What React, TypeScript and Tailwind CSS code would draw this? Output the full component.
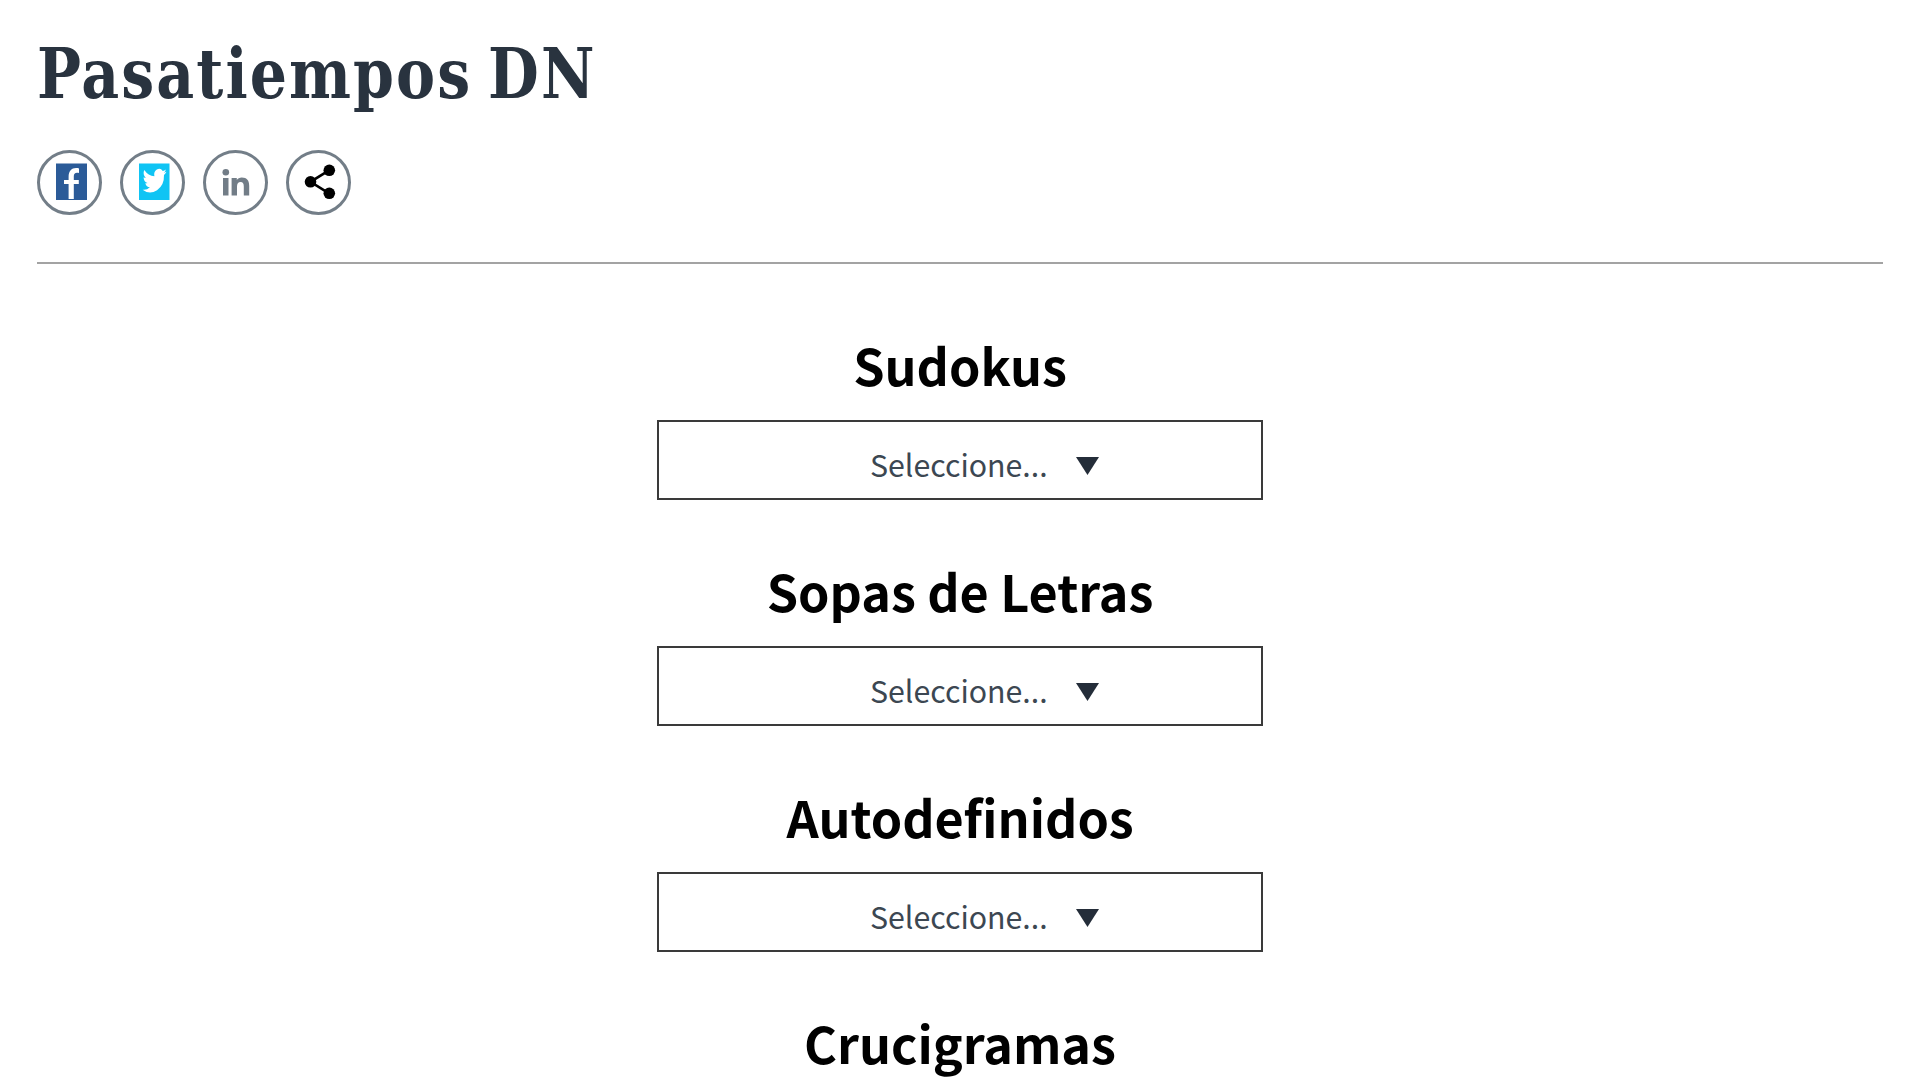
import type { ReactNode } from 'react';

const puzzles = [
  { name: 'Sudokus', selectable: true },
  { name: 'Sopas de Letras', selectable: true },
  { name: 'Autodefinidos', selectable: true },
  { name: 'Crucigramas', selectable: false },
];

function FacebookIcon() {
  return (
    <svg width="59" height="59" viewBox="3 3 59 59">
      <rect x="19" y="13.5" width="31" height="36.5" fill="#2b5b98" />
      <path
        d="M31.6 49V34h-4.6v-4h4.6v-3.300c0-5.600 3-8.700 7.400-8.700 1.300 0 2.400.2 3 .4v4.600c-.6-.1-1.300-.2-2-.2-2.200 0-3.200 1.200-3.200 3.500V30h5v4h-5v15z"
        fill="#fff"
      />
    </svg>
  );
}

function TwitterIcon() {
  return (
    <svg width="59" height="59" viewBox="3 3 59 59">
      <rect x="19" y="13.5" width="30.5" height="36.5" fill="#0fc4f4" />
      <g transform="translate(22 18) scale(1 1.2)">
        <path
          d="M24.5 3.200a9.600 9.600 0 0 1-2.800.8A4.900 4.900 0 0 0 23.900 1.200a9.700 9.700 0 0 1-3.100 1.200 4.900 4.900 0 0 0-8.400 4.500A13.900 13.900 0 0 1 2.300 1.700a4.900 4.900 0 0 0 1.500 6.600 4.800 4.800 0 0 1-2.200-.6v.1a4.900 4.900 0 0 0 3.900 4.800 4.900 4.900 0 0 1-2.200.1 4.900 4.900 0 0 0 4.600 3.400A9.800 9.800 0 0 1 .6 18.100a13.900 13.900 0 0 0 21.400-12.300 10 10 0 0 0 2.500-2.600z"
          fill="#fff"
        />
      </g>
    </svg>
  );
}

function LinkedinIcon() {
  return (
    <svg width="59" height="59" viewBox="3 3 59 59" fill="#727d87">
      <circle cx="22.8" cy="22.2" r="3.3" />
      <path d="M20 28h5.500v17.500H20z" />
      <path d="M28.600 28h5.200v2c.9-1.500 2.700-2.500 5-2.500 5.200 0 7.400 3 7.400 8.200v9.800h-5.400v-8.900c0-2.800-.9-4.500-3.100-4.500-2.700 0-3.700 1.900-3.700 4.500v8.900h-5.400z" />
    </svg>
  );
}

function ShareIcon() {
  return (
    <svg width="59" height="59" viewBox="3 3 59 59">
      <path d="M43 20.300 24.500 31.800 43 43.300" fill="none" stroke="#000" strokeWidth="2.6" />
      <circle cx="24.5" cy="31.8" r="5.8" />
      <circle cx="43.3" cy="20.3" r="5.8" />
      <circle cx="43.3" cy="43.3" r="5.8" />
    </svg>
  );
}

function ShareButton({ label, children }: { label: string; children: ReactNode }) {
  return (
    <button
      type="button"
      aria-label={label}
      className="grid size-[65px] place-items-center rounded-full border-3 border-[#737e88]"
    >
      {children}
    </button>
  );
}

function PuzzleSection({ name, selectable }: { name: string; selectable: boolean }) {
  return (
    <section className="flex flex-col items-center">
      <h2 className="text-[50.3px] leading-[60px] font-bold whitespace-nowrap text-black">{name}</h2>
      {selectable && (
        <button
          type="button"
          className="mt-[26px] mb-[60px] flex h-[80px] w-[606px] items-center border-2 border-[#3a3a3a] pt-[8px] pl-[211px]"
        >
          <span className="w-[206px] text-left text-[30.3px] leading-none whitespace-nowrap text-[#3c4752]">
            Seleccione...
          </span>
          <svg className="mt-[3px]" width="23" height="18" viewBox="0 0 23 18" fill="#242d39">
            <path d="M0 0h23L11.500 18z" />
          </svg>
        </button>
      )}
    </section>
  );
}

export default function App() {
  return (
    <div className="h-screen overflow-hidden bg-white px-[37px] font-['Noto_Sans_CJK_SC',sans-serif]">
      <header className="flex h-[263.5px] flex-col border-b-2 border-[#a3a3a3]">
        <h1 className="mt-[29px] h-[90px] origin-left scale-x-[0.93] self-start font-['DejaVu_Serif_Condensed','DejaVu_Serif',serif] text-[70px] leading-[90px] font-bold font-stretch-condensed tracking-[2.2px] whitespace-nowrap text-[#29333f] [word-spacing:-7px]">
          Pasatiempos DN
        </h1>
        <div className="mt-[31px] flex gap-[18px]">
          <ShareButton label="Facebook">
            <FacebookIcon />
          </ShareButton>
          <ShareButton label="Twitter">
            <TwitterIcon />
          </ShareButton>
          <ShareButton label="LinkedIn">
            <LinkedinIcon />
          </ShareButton>
          <ShareButton label="Compartir">
            <ShareIcon />
          </ShareButton>
        </div>
      </header>
      <main className="pt-[70.5px]">
        {puzzles.map((puzzle) => (
          <PuzzleSection key={puzzle.name} {...puzzle} />
        ))}
      </main>
    </div>
  );
}
